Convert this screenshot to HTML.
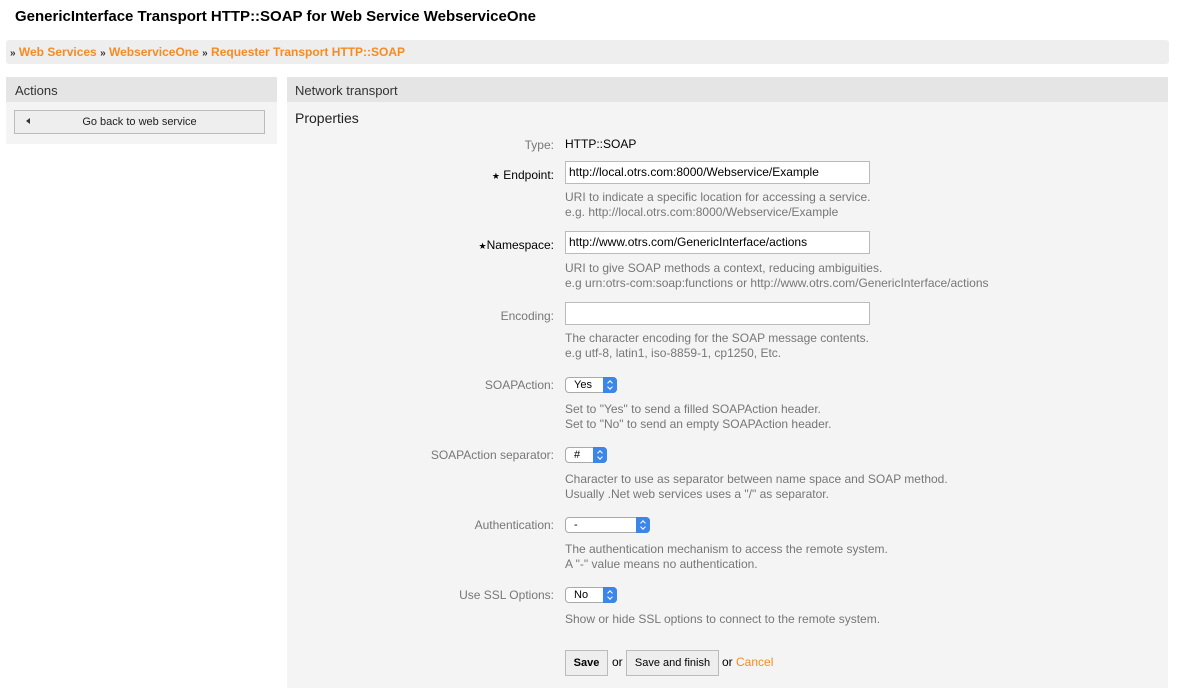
<!DOCTYPE html><html><head><style>
body{margin:0;width:1184px;height:700px;background:#fff;font-family:"Liberation Sans",sans-serif;font-size:12px;color:#000;position:relative;overflow:hidden}
.a{position:absolute;white-space:nowrap}
.l{position:absolute;right:630px;color:#777;text-align:right;white-space:nowrap}
.h{position:absolute;left:565px;color:#777;line-height:15px;white-space:nowrap}
.in{position:absolute;left:565px;width:300px;height:21px;border:1px solid #bbb;background:#fff;line-height:21px;padding-left:3px;box-sizing:content-box}
.sel{position:absolute;left:565px;border:1px solid #aaa;border-radius:4px;background:#fff;font-size:11px;line-height:14px;padding-left:8px;box-sizing:border-box;height:16px}
.sel b{position:absolute;right:-1px;top:-1px;width:14px;height:16px;background:#3b86e8;border-radius:0 4px 4px 0}
.sel b:after{content:"";position:absolute;left:5px;top:4px;width:3px;height:3px;border-left:1px solid #fff;border-top:1px solid #fff;transform:rotate(45deg)}
.sel b:before{content:"";position:absolute;left:5px;top:8px;width:3px;height:3px;border-right:1px solid #fff;border-bottom:1px solid #fff;transform:rotate(45deg)}
.btn{position:absolute;top:650px;height:24px;border:1px solid #bbb;background:#eee;line-height:24px;text-align:center;font-size:11px}
.st{font-size:9px}
</style></head><body>
<div class="a" style="left:15px;top:8px;font-size:15px;font-weight:bold">GenericInterface Transport HTTP::SOAP for Web Service WebserviceOne</div>
<div class="a" style="left:6px;top:40px;width:1163px;height:24px;background:#eee;border-radius:3px"></div>
<div class="a" style="left:10px;top:45px;font-weight:bold;color:#f78b20"><span style="color:#333;font-size:10px">»</span> Web Services <span style="color:#333;font-size:10px">»</span> WebserviceOne <span style="color:#333;font-size:10px">»</span> Requester Transport HTTP::SOAP</div>
<div class="a" style="left:6px;top:77px;width:271px;height:25px;background:#e5e5e5"></div>
<div class="a" style="left:6px;top:102px;width:271px;height:42px;background:#f4f4f4"></div>
<div class="a" style="left:15px;top:83px;font-size:13px;color:#333">Actions</div>
<div class="a" style="left:14px;top:110px;width:249px;height:22px;border:1px solid #bbb;background:#eee;font-size:11px;line-height:22px;text-align:center;color:#222">Go back to web service</div>
<div class="a" style="left:26px;top:118px;width:0;height:0;border-top:3px solid transparent;border-bottom:3px solid transparent;border-right:4px solid #333"></div>
<div class="a" style="left:287px;top:77px;width:881px;height:25px;background:#e5e5e5"></div>
<div class="a" style="left:287px;top:102px;width:881px;height:586px;background:#f4f4f4"></div>
<div class="a" style="left:295px;top:83px;font-size:13px;color:#333">Network transport</div>
<div class="a" style="left:295px;top:110px;font-size:14px;color:#222">Properties</div>
<div class="l" style="top:138px">Type:</div><div class="a" style="left:565px;top:137px">HTTP::SOAP</div>
<div class="l" style="top:168px;color:#000"><span class="st">★</span> Endpoint:</div><div class="in" style="top:161px">http://local.otrs.com:8000/Webservice/Example</div>
<div class="h" style="top:190px">URI to indicate a specific location for accessing a service.<br>e.g. http://local.otrs.com:8000/Webservice/Example</div>
<div class="l" style="top:238px;color:#000"><span class="st">★</span>Namespace:</div><div class="in" style="top:231px">http://www.otrs.com/GenericInterface/actions</div>
<div class="h" style="top:261px">URI to give SOAP methods a context, reducing ambiguities.<br>e.g urn:otrs-com:soap:functions or http://www.otrs.com/GenericInterface/actions</div>
<div class="l" style="top:309px">Encoding:</div><div class="in" style="top:302px"></div>
<div class="h" style="top:331px">The character encoding for the SOAP message contents.<br>e.g utf-8, latin1, iso-8859-1, cp1250, Etc.</div>
<div class="l" style="top:378px">SOAPAction:</div><div class="sel" style="top:377px;width:52px">Yes<b></b></div>
<div class="h" style="top:402px">Set to "Yes" to send a filled SOAPAction header.<br>Set to "No" to send an empty SOAPAction header.</div>
<div class="l" style="top:448px">SOAPAction separator:</div><div class="sel" style="top:447px;width:42px">#<b></b></div>
<div class="h" style="top:472px">Character to use as separator between name space and SOAP method.<br>Usually .Net web services uses a "/" as separator.</div>
<div class="l" style="top:518px">Authentication:</div><div class="sel" style="top:517px;width:85px">-<b></b></div>
<div class="h" style="top:542px">The authentication mechanism to access the remote system.<br>A "-" value means no authentication.</div>
<div class="l" style="top:588px">Use SSL Options:</div><div class="sel" style="top:587px;width:52px">No<b></b></div>
<div class="h" style="top:612px">Show or hide SSL options to connect to the remote system.</div>
<div class="btn" style="left:565px;width:41px;font-weight:bold">Save</div>
<div class="a" style="left:612px;top:655px">or</div>
<div class="btn" style="left:626px;width:91px">Save and finish</div>
<div class="a" style="left:722px;top:655px">or <span style="color:#f78b20">Cancel</span></div>
</body></html>
